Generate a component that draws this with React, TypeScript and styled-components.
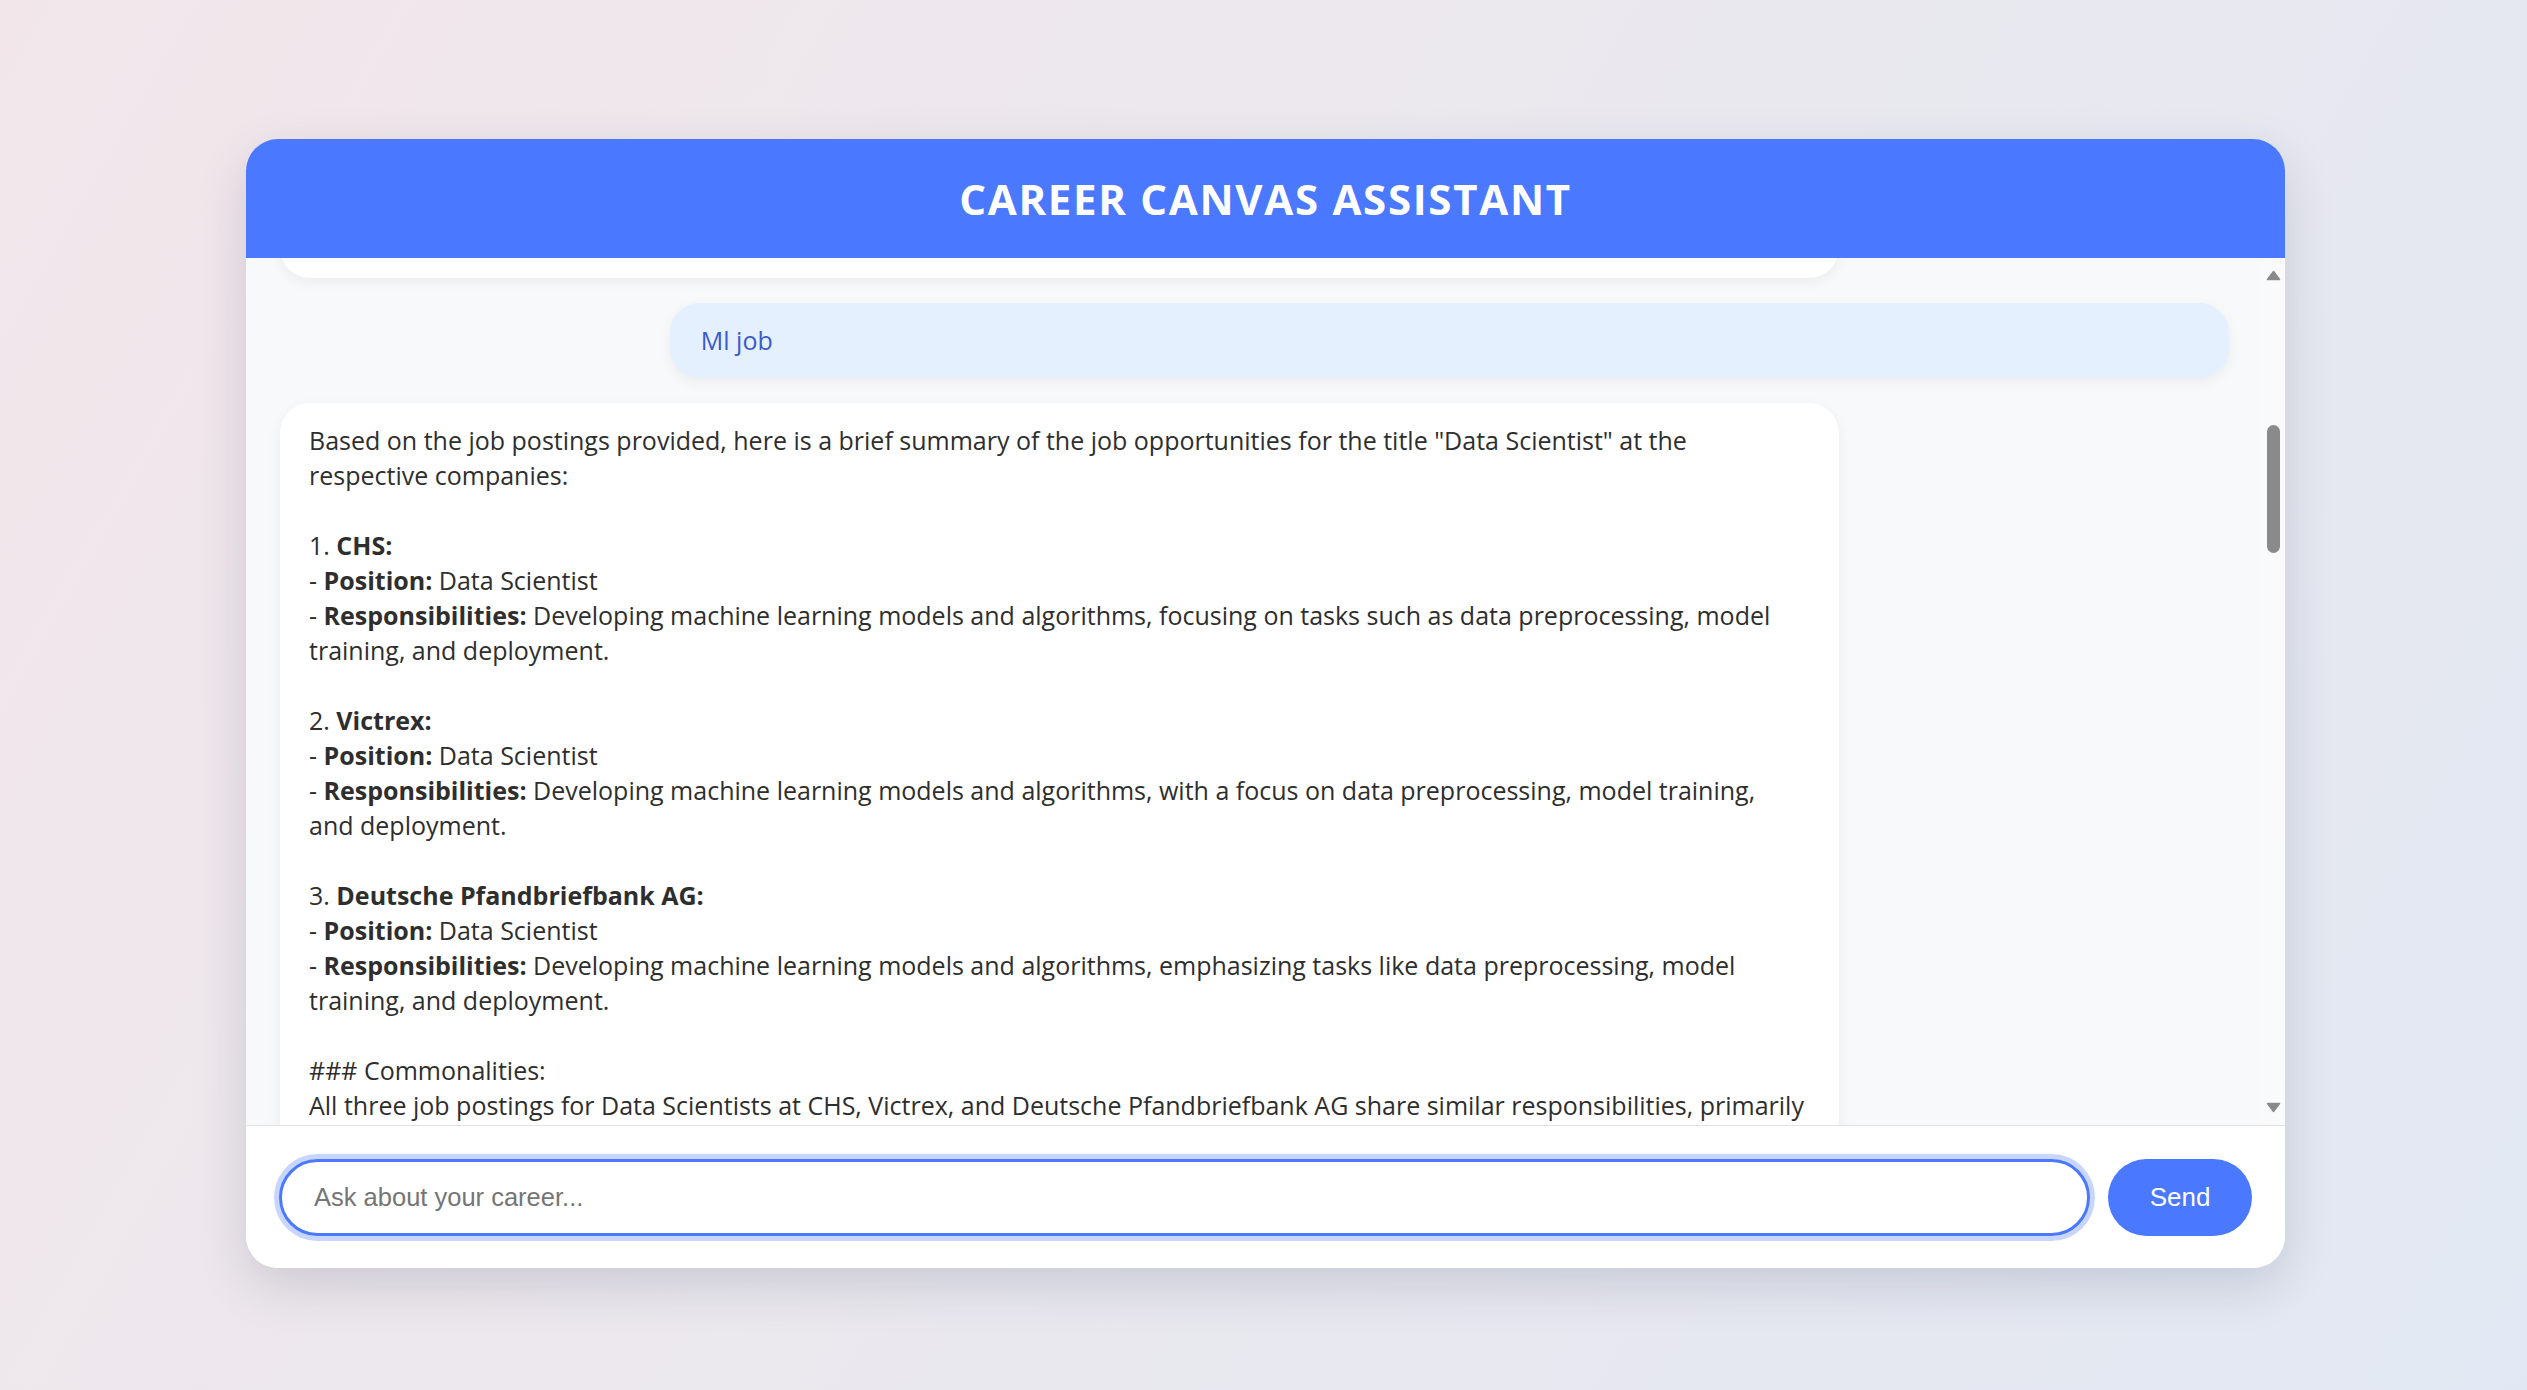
import React, { useLayoutEffect, useRef } from "react";
import styled, { createGlobalStyle } from "styled-components";

const GlobalStyle = createGlobalStyle`
  html, body { margin: 0; padding: 0; }
  body { font-family: "Open Sans", "Noto Sans", sans-serif; }
  * { box-sizing: border-box; }
`;

const BLUE = "#4a78fe";

const Page = styled.div`
  min-height: 100vh;
  display: flex;
  justify-content: center;
  align-items: flex-start;
  padding: 139px 0 0 4px;
  background: linear-gradient(120deg, #f2e6ea 0%, #ebe8ee 45%, #e2e8f3 100%);
`;

const Card = styled.div`
  width: 2039px;
  height: 1129px;
  display: flex;
  flex-direction: column;
  background: #ffffff;
  border-radius: 32px;
  overflow: hidden;
  box-shadow: 0 18px 50px rgba(40, 50, 80, 0.16);
`;

const Header = styled.header`
  height: 119px;
  flex-shrink: 0;
  display: flex;
  align-items: center;
  justify-content: center;
  background: ${BLUE};
`;

const Title = styled.h1`
  margin: 0;
  color: #ffffff;
  font-family: "Open Sans", "Noto Sans", sans-serif;
  font-weight: 700;
  font-size: 42px;
  line-height: 1;
  letter-spacing: 1.7px;
  text-transform: uppercase;
`;

const MessagesWrap = styled.div`
  position: relative;
  flex: 1;
  min-height: 0;
  background: #f8f9fa;
  border-bottom: 1px solid #e2e2e4;
`;

const ScrollArea = styled.div`
  position: relative;
  height: 100%;
  overflow-y: auto;
  scrollbar-width: none;
  padding: 20px 56px 20px 34px;
  display: flex;
  flex-direction: column;
  gap: 25px;
  &::-webkit-scrollbar { display: none; }
`;

const Bubble = styled.div<{ $from: "bot" | "user" }>`
  flex-shrink: 0;
  width: 80%;
  align-self: ${(p) => (p.$from === "user" ? "flex-end" : "flex-start")};
  padding: ${(p) => (p.$from === "user" ? "20px 31px" : "20px 29px")};
  border-radius: 30px;
  background: ${(p) => (p.$from === "user" ? "#e4f0fe" : "#ffffff")};
  color: ${(p) => (p.$from === "user" ? "#3b5bc8" : "#2e2e2e")};
  font-family: "Open Sans", "Noto Sans", sans-serif;
  font-size: 25px;
  line-height: 35px;
  white-space: pre-wrap;
  box-shadow: 0 4px 14px rgba(0, 0, 0, 0.06);
`;

const Strong = styled.strong`
  font-weight: 700;
`;

const Rail = styled.div`
  position: absolute;
  top: 0;
  right: 0;
  bottom: 0;
  width: 23px;
  background: #fafafa;
`;

const RailArrow = styled.svg<{ $dir: "up" | "down" }>`
  position: absolute;
  left: 4px;
  width: 15px;
  height: 11px;
  ${(p) => (p.$dir === "up" ? "top: 12px;" : "bottom: 12px;")}
`;

const Thumb = styled.div`
  position: absolute;
  left: 5px;
  width: 13px;
  border-radius: 7px;
  background: #8a8a8a;
`;

const InputBar = styled.form`
  flex-shrink: 0;
  display: flex;
  align-items: center;
  gap: 18px;
  padding: 33px 33px 32px;
  background: #ffffff;
`;

const TextInput = styled.input`
  flex: 1;
  height: 77px;
  border: 3px solid ${BLUE};
  border-radius: 40px;
  padding: 0 32px;
  font-family: "Liberation Sans", Arial, sans-serif;
  font-size: 25.5px;
  color: #222;
  outline: none;
  box-shadow: 0 0 0 5px rgba(74, 120, 254, 0.3);
  &::placeholder { color: #757575; }
`;

const SendButton = styled.button`
  width: 144px;
  height: 77px;
  border: none;
  border-radius: 40px;
  background: ${BLUE};
  color: #ffffff;
  font-family: "Liberation Sans", Arial, sans-serif;
  font-size: 26px;
  cursor: pointer;
`;

type Seg = [string, boolean?];

const previous: Seg[][] = [
  [["Hello! I'm your Career Canvas Assistant. Tell me about the role you are looking for and I will search the latest job postings for you."]],
];

const reply: Seg[][] = [
  [["Based on the job postings provided, here is a brief summary of the job opportunities for the title \"Data Scientist\" at the\nrespective companies:"]],
  [],
  [["1. "], ["CHS:", true]],
  [["- "], ["Position:", true], [" Data Scientist"]],
  [["- "], ["Responsibilities:", true], [" Developing machine learning models and algorithms, focusing on tasks such as data preprocessing, model\ntraining, and deployment."]],
  [],
  [["2. "], ["Victrex:", true]],
  [["- "], ["Position:", true], [" Data Scientist"]],
  [["- "], ["Responsibilities:", true], [" Developing machine learning models and algorithms, with a focus on data preprocessing, model training,\nand deployment."]],
  [],
  [["3. "], ["Deutsche Pfandbriefbank AG:", true]],
  [["- "], ["Position:", true], [" Data Scientist"]],
  [["- "], ["Responsibilities:", true], [" Developing machine learning models and algorithms, emphasizing tasks like data preprocessing, model\ntraining, and deployment."]],
  [],
  [["### Commonalities:"]],
  [["All three job postings for Data Scientists at CHS, Victrex, and Deutsche Pfandbriefbank AG share similar responsibilities, primarily\nfocusing on developing machine learning models and algorithms, along with data preprocessing, model training, and deployment."]],
  [],
  [["### Conclusion:"]],
  [["These roles offer a strong opportunity to apply machine learning skills across different industries."]],
];

function renderLines(lines: Seg[][]) {
  return lines.map((line, i) => (
    <React.Fragment key={i}>
      {line.map(([t, b], j) => (b ? <Strong key={j}>{t}</Strong> : <React.Fragment key={j}>{t}</React.Fragment>))}
      {i < lines.length - 1 ? "\n" : null}
    </React.Fragment>
  ));
}

export default function App() {
  const scrollRef = useRef<HTMLDivElement>(null);
  const prevRef = useRef<HTMLDivElement>(null);

  useLayoutEffect(() => {
    const s = scrollRef.current;
    const p = prevRef.current;
    if (s && p) s.scrollTop = p.offsetTop + p.offsetHeight - 20;
  }, []);

  return (
    <>
      <GlobalStyle />
      <Page>
        <Card>
          <Header>
            <Title>Career Canvas Assistant</Title>
          </Header>
          <MessagesWrap>
            <ScrollArea ref={scrollRef}>
              <Bubble $from="bot" ref={prevRef}>{renderLines(previous)}</Bubble>
              <Bubble $from="user">Ml job</Bubble>
              <Bubble $from="bot">{renderLines(reply)}</Bubble>
            </ScrollArea>
            <Rail>
              <RailArrow $dir="up" viewBox="0 0 15 11">
                <path d="M7.5 1.5 L13.5 9.5 L1.5 9.5 Z" fill="#8a8a8a" stroke="#8a8a8a" strokeWidth="1.5" strokeLinejoin="round" />
              </RailArrow>
              <Thumb style={{ top: 167, height: 128 }} />
              <RailArrow $dir="down" viewBox="0 0 15 11">
                <path d="M1.5 1.5 L13.5 1.5 L7.5 9.5 Z" fill="#8a8a8a" stroke="#8a8a8a" strokeWidth="1.5" strokeLinejoin="round" />
              </RailArrow>
            </Rail>
          </MessagesWrap>
          <InputBar onSubmit={(e) => e.preventDefault()}>
            <TextInput placeholder="Ask about your career..." />
            <SendButton type="submit">Send</SendButton>
          </InputBar>
        </Card>
      </Page>
    </>
  );
}
